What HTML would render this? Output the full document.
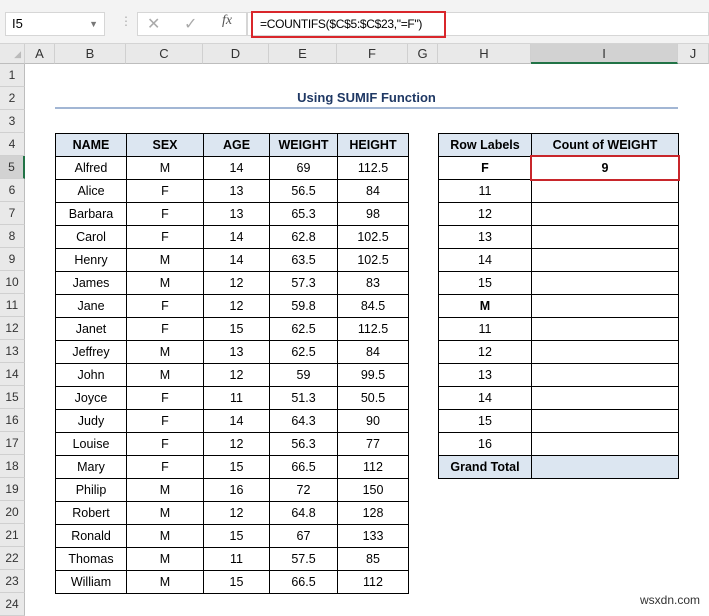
<!DOCTYPE html>
<html><head><meta charset="utf-8"><style>
*{box-sizing:border-box;margin:0;padding:0}
body{width:709px;height:613px;overflow:hidden;background:#fff;font-family:"Liberation Sans",sans-serif;font-size:12px;color:#000;position:relative}
.abs{position:absolute}
.top{left:0;top:0;width:709px;height:44px;background:#f3f3f3;border-bottom:1px solid #d4d4d4}
.ch{top:44px;height:20px;background:#e9e9e9;border-bottom:1px solid #bdbdbd;border-right:1px solid #d0d0d0;text-align:center;line-height:20px;font-size:13px;color:#333}
.rh{left:0;width:25px;height:23px;background:#e9e9e9;border-bottom:1px solid #d0d0d0;border-right:1px solid #bdbdbd;text-align:center;line-height:23px;font-size:12px;color:#333}
table{border-collapse:collapse;position:absolute}
td{border:1px solid #000;height:23px;text-align:center;padding:0;font-size:12.5px}
.hd td{background:#dce6f1;font-weight:bold}
</style></head><body>
<div class="abs top"></div>
<div class="abs" style="left:5px;top:12px;width:100px;height:24px;background:#fff;border:1px solid #d6d6d6;line-height:22px;padding-left:6px;font-size:13px">I5<span style="position:absolute;right:6px;top:0;font-size:9px;color:#777">▼</span></div>
<div class="abs" style="left:120px;top:14px;color:#aaa;font-size:12px">⋮</div>
<div class="abs" style="left:137px;top:12px;width:110px;height:24px;background:#fff;border:1px solid #d6d6d6"></div>
<div class="abs" style="left:147px;top:14px;color:#aaa;font-size:16px">✕</div>
<div class="abs" style="left:184px;top:14px;color:#aaa;font-size:16px">✓</div>
<div class="abs" style="left:222px;top:13px;color:#555;font-size:14px;font-style:italic;font-family:'Liberation Serif',serif">fx</div>
<div class="abs" style="left:247px;top:12px;width:462px;height:24px;background:#fff;border:1px solid #d6d6d6"></div>
<div class="abs" style="left:251px;top:11px;width:195px;height:27px;border:2px solid #d9262b;line-height:23px;padding-left:7px;font-size:12px;letter-spacing:-0.3px;white-space:nowrap">=COUNTIFS($C$5:$C$23,"=F")</div>

<div class="abs ch" style="left:0;width:25px;color:#bbb;font-size:9px;text-align:right;padding-right:3px">◢</div>
<div class="abs ch" style="left:25px;width:30px">A</div>
<div class="abs ch" style="left:55px;width:71px">B</div>
<div class="abs ch" style="left:126px;width:77px">C</div>
<div class="abs ch" style="left:203px;width:66px">D</div>
<div class="abs ch" style="left:269px;width:68px">E</div>
<div class="abs ch" style="left:337px;width:71px">F</div>
<div class="abs ch" style="left:408px;width:30px">G</div>
<div class="abs ch" style="left:438px;width:93px">H</div>
<div class="abs ch" style="left:531px;width:147px;background:#d2d2d2;border-bottom:2px solid #217346">I</div>
<div class="abs ch" style="left:678px;width:31px">J</div>

<div class="abs rh" style="top:64px">1</div>
<div class="abs rh" style="top:87px">2</div>
<div class="abs rh" style="top:110px">3</div>
<div class="abs rh" style="top:133px">4</div>
<div class="abs rh" style="top:156px;background:#d2d2d2;border-right:2px solid #217346">5</div>
<div class="abs rh" style="top:179px">6</div>
<div class="abs rh" style="top:202px">7</div>
<div class="abs rh" style="top:225px">8</div>
<div class="abs rh" style="top:248px">9</div>
<div class="abs rh" style="top:271px">10</div>
<div class="abs rh" style="top:294px">11</div>
<div class="abs rh" style="top:317px">12</div>
<div class="abs rh" style="top:340px">13</div>
<div class="abs rh" style="top:363px">14</div>
<div class="abs rh" style="top:386px">15</div>
<div class="abs rh" style="top:409px">16</div>
<div class="abs rh" style="top:432px">17</div>
<div class="abs rh" style="top:455px">18</div>
<div class="abs rh" style="top:478px">19</div>
<div class="abs rh" style="top:501px">20</div>
<div class="abs rh" style="top:524px">21</div>
<div class="abs rh" style="top:547px">22</div>
<div class="abs rh" style="top:570px">23</div>
<div class="abs rh" style="top:593px">24</div>

<div class="abs" style="left:55px;top:88px;width:623px;height:20px;text-align:center;font-weight:bold;font-size:13px;color:#1f3864;line-height:20px">Using SUMIF Function</div>
<div class="abs" style="left:55px;top:107px;width:623px;height:2px;background:#a2b6d4"></div>

<table style="left:55px;top:133px">
<colgroup><col style="width:71px"><col style="width:77px"><col style="width:66px"><col style="width:68px"><col style="width:71px"></colgroup>
<tr class="hd"><td>NAME</td><td>SEX</td><td>AGE</td><td>WEIGHT</td><td>HEIGHT</td></tr>
<tr><td>Alfred</td><td>M</td><td>14</td><td>69</td><td>112.5</td></tr>
<tr><td>Alice</td><td>F</td><td>13</td><td>56.5</td><td>84</td></tr>
<tr><td>Barbara</td><td>F</td><td>13</td><td>65.3</td><td>98</td></tr>
<tr><td>Carol</td><td>F</td><td>14</td><td>62.8</td><td>102.5</td></tr>
<tr><td>Henry</td><td>M</td><td>14</td><td>63.5</td><td>102.5</td></tr>
<tr><td>James</td><td>M</td><td>12</td><td>57.3</td><td>83</td></tr>
<tr><td>Jane</td><td>F</td><td>12</td><td>59.8</td><td>84.5</td></tr>
<tr><td>Janet</td><td>F</td><td>15</td><td>62.5</td><td>112.5</td></tr>
<tr><td>Jeffrey</td><td>M</td><td>13</td><td>62.5</td><td>84</td></tr>
<tr><td>John</td><td>M</td><td>12</td><td>59</td><td>99.5</td></tr>
<tr><td>Joyce</td><td>F</td><td>11</td><td>51.3</td><td>50.5</td></tr>
<tr><td>Judy</td><td>F</td><td>14</td><td>64.3</td><td>90</td></tr>
<tr><td>Louise</td><td>F</td><td>12</td><td>56.3</td><td>77</td></tr>
<tr><td>Mary</td><td>F</td><td>15</td><td>66.5</td><td>112</td></tr>
<tr><td>Philip</td><td>M</td><td>16</td><td>72</td><td>150</td></tr>
<tr><td>Robert</td><td>M</td><td>12</td><td>64.8</td><td>128</td></tr>
<tr><td>Ronald</td><td>M</td><td>15</td><td>67</td><td>133</td></tr>
<tr><td>Thomas</td><td>M</td><td>11</td><td>57.5</td><td>85</td></tr>
<tr><td>William</td><td>M</td><td>15</td><td>66.5</td><td>112</td></tr>
</table>

<table style="left:438px;top:133px">
<colgroup><col style="width:93px"><col style="width:147px"></colgroup>
<tr class="hd"><td>Row Labels</td><td>Count of WEIGHT</td></tr>
<tr><td style="font-weight:bold">F</td><td style="font-weight:bold">9</td></tr>
<tr><td>11</td><td></td></tr>
<tr><td>12</td><td></td></tr>
<tr><td>13</td><td></td></tr>
<tr><td>14</td><td></td></tr>
<tr><td>15</td><td></td></tr>
<tr><td style="font-weight:bold">M</td><td></td></tr>
<tr><td>11</td><td></td></tr>
<tr><td>12</td><td></td></tr>
<tr><td>13</td><td></td></tr>
<tr><td>14</td><td></td></tr>
<tr><td>15</td><td></td></tr>
<tr><td>16</td><td></td></tr>
<tr class="hd"><td>Grand Total</td><td></td></tr>
</table>
<div class="abs" style="left:530px;top:155px;width:150px;height:26px;border:2px solid #c8262b"></div>
<div class="abs" style="left:640px;top:593px;font-size:12px;color:#333">wsxdn.com</div>
</body></html>
